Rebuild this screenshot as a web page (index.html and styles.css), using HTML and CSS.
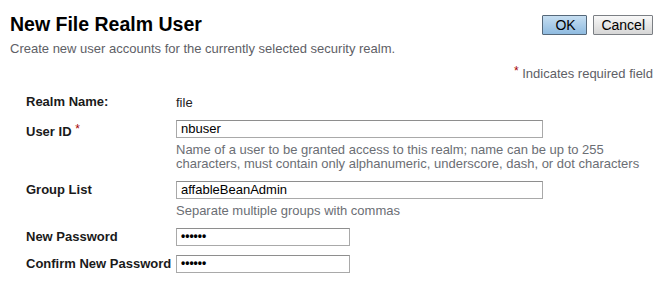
FILE: index.html
```html
<!DOCTYPE html>
<html>
<head>
<meta charset="utf-8">
<link rel="stylesheet" href="styles.css">
</head>
<body>
<div class="page">
  <div class="header">
    <div class="titles">
      <h1 class="title">New File Realm User</h1>
      <p class="subtitle">Create new user accounts for the currently selected security realm.</p>
    </div>
    <div class="buttons">
      <button class="btn btn-primary">OK</button>
      <button class="btn">Cancel</button>
    </div>
  </div>
  <div class="required-note"><span class="star">*</span> Indicates required field</div>
  <div class="form">
    <div class="label">Realm Name:</div>
    <div class="value"><span class="plain">file</span></div>

    <div class="label">User ID <span class="star">*</span></div>
    <div class="value">
      <div class="input wide">nbuser</div>
      <div class="help">Name of a user to be granted access to this realm; name can be up to 255 characters, must contain only alphanumeric, underscore, dash, or dot characters</div>
    </div>

    <div class="label">Group List</div>
    <div class="value">
      <div class="input wide">affableBeanAdmin</div>
      <div class="help">Separate multiple groups with commas</div>
    </div>

    <div class="label">New Password</div>
    <div class="value">
      <div class="input narrow pw">&bull;&bull;&bull;&bull;&bull;&bull;</div>
    </div>

    <div class="label">Confirm New Password</div>
    <div class="value">
      <div class="input narrow pw">&bull;&bull;&bull;&bull;&bull;&bull;</div>
    </div>
  </div>
</div>
</body>
</html>
```

FILE: styles.css
```css
html, body {
  margin: 0;
  padding: 0;
  background: #fff;
}
body {
  font-family: "Liberation Sans", Arial, sans-serif;
  font-size: 13px;
  color: #000;
}
.page {
  width: 663px;
  height: 298px;
  box-sizing: border-box;
  padding: 0 10px 0 10px;
}
.header {
  display: flex;
  justify-content: space-between;
  align-items: flex-start;
}
.title {
  margin: 0;
  padding-top: 12px;
  font-size: 19.5px;
  line-height: 24px;
  font-weight: bold;
  color: #000;
}
.subtitle {
  margin: 5px 0 0 0;
  font-size: 13px;
  line-height: 16px;
  color: #5e6066;
}
.buttons {
  display: flex;
  gap: 6px;
  padding-top: 15px;
}
.btn {
  font-family: "Liberation Sans", Arial, sans-serif;
  font-size: 14px;
  height: 20px;
  line-height: 16px;
  padding: 0 7px;
  border: 1px solid #7b7f84;
  border-radius: 1px;
  background: linear-gradient(#f8f8f8, #d6d6d6);
  color: #000;
  box-sizing: border-box;
}
.btn-primary {
  padding: 0 12px;
  width: 45px;
  border-color: #55687a;
  background: linear-gradient(#c6def1, #8fbbe0);
}
.required-note {
  text-align: right;
  margin-top: 6px;
  line-height: 16px;
  color: #5e6066;
}
.star {
  color: #a40000;
  font-size: 12px;
  vertical-align: 3px;
}
.form {
  display: grid;
  grid-template-columns: 150px 1fr;
  row-gap: 9px;
  margin-top: 11px;
  padding-left: 16px;
}
.label {
  font-weight: bold;
  line-height: 16px;
  color: #1a1a1a;
  padding-top: 1px;
}
.label .star {
  font-weight: normal;
}
.value {
  display: flex;
  flex-direction: column;
}
.plain {
  line-height: 16px;
  padding-top: 2px;
  color: #222;
}
.input {
  box-sizing: border-box;
  height: 18px;
  line-height: 16px;
  padding: 0 4px;
  border: 1px solid #a9a9a9;
  border-top-color: #8e8e8e;
  background: #fff;
  color: #000;
}
.wide { width: 367px; }
.narrow { width: 174px; }
.pw {
  font-size: 12px;
  font-weight: bold;
  line-height: 15px;
}
.help {
  margin-top: 5px;
  margin-bottom: 1px;
  line-height: 14px;
  color: #6b6e74;
  width: 480px;
}
```
